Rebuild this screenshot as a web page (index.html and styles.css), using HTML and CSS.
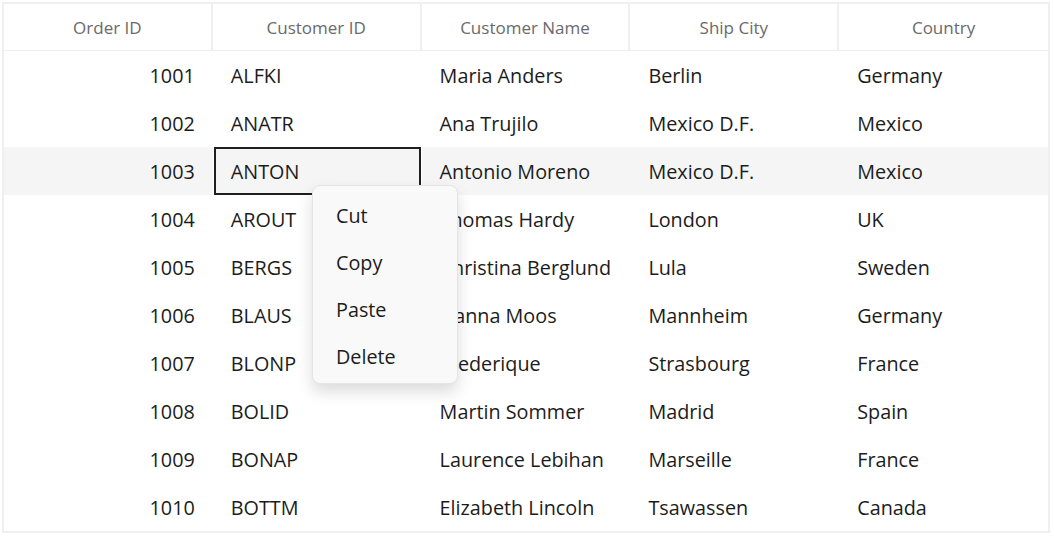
FILE: index.html
```html
<!DOCTYPE html>
<html lang="en">
<head>
  <meta charset="UTF-8">
  <meta name="viewport" content="width=device-width, initial-scale=1.0">
  <title>Orders</title>
  <link rel="stylesheet" href="styles.css">
</head>
<body>
  <div class="gridWrap">
    <div class="grid">
      <div class="headCell">Order ID</div>
      <div class="headCell">Customer ID</div>
      <div class="headCell">Customer Name</div>
      <div class="headCell">Ship City</div>
      <div class="headCell last">Country</div>

      <div class="row"><div class="cell num">1001</div><div class="cell">ALFKI</div><div class="cell">Maria Anders</div><div class="cell">Berlin</div><div class="cell">Germany</div></div>
      <div class="row"><div class="cell num">1002</div><div class="cell">ANATR</div><div class="cell">Ana Trujilo</div><div class="cell">Mexico D.F.</div><div class="cell">Mexico</div></div>
      <div class="row selected"><div class="cell num">1003</div><div class="cell current">ANTON</div><div class="cell">Antonio Moreno</div><div class="cell">Mexico D.F.</div><div class="cell">Mexico</div></div>
      <div class="row"><div class="cell num">1004</div><div class="cell">AROUT</div><div class="cell">Thomas Hardy</div><div class="cell">London</div><div class="cell">UK</div></div>
      <div class="row"><div class="cell num">1005</div><div class="cell">BERGS</div><div class="cell">Christina Berglund</div><div class="cell">Lula</div><div class="cell">Sweden</div></div>
      <div class="row"><div class="cell num">1006</div><div class="cell">BLAUS</div><div class="cell">Hanna Moos</div><div class="cell">Mannheim</div><div class="cell">Germany</div></div>
      <div class="row"><div class="cell num">1007</div><div class="cell">BLONP</div><div class="cell">Frederique</div><div class="cell">Strasbourg</div><div class="cell">France</div></div>
      <div class="row"><div class="cell num">1008</div><div class="cell">BOLID</div><div class="cell">Martin Sommer</div><div class="cell">Madrid</div><div class="cell">Spain</div></div>
      <div class="row"><div class="cell num">1009</div><div class="cell">BONAP</div><div class="cell">Laurence Lebihan</div><div class="cell">Marseille</div><div class="cell">France</div></div>
      <div class="row"><div class="cell num">1010</div><div class="cell">BOTTM</div><div class="cell">Elizabeth Lincoln</div><div class="cell">Tsawassen</div><div class="cell">Canada</div></div>
    </div>

    <!-- right-click menu for the current cell -->
    <ul class="contextMenu">
      <li>Cut</li>
      <li>Copy</li>
      <li>Paste</li>
      <li>Delete</li>
    </ul>
  </div>
</body>
</html>
```

FILE: styles.css
```css
body{
  margin: 0;
  padding: 2px;
  background-color: #ffffff;
  font-family: "Open Sans", "Noto Sans", sans-serif;
  color: #1c1c1c;
}
.gridWrap{
  position: relative;
  width: 1048px;
}
.grid{
  display: grid;
  grid-template-columns: repeat(5, 1fr);
  border: 2px solid #efefef;
}
.headCell{
  height: 46px;
  display: flex;
  align-items: center;
  justify-content: center;
  font-size: 17px;
  color: #6a6a6a;
  border-right: 2px solid #efefef;
  border-bottom: 1px solid #efefef;
}
.headCell.last{
  border-right: none;
}
.row{
  display: contents;
}
.cell{
  height: 48px;
  display: flex;
  align-items: center;
  padding-left: 18px;
  font-size: 19.8px;
  white-space: nowrap;
  overflow: hidden;
}
.cell.num{
  justify-content: flex-end;
  padding-left: 0;
  padding-right: 18px;
}
.row.selected .cell{
  background-color: #f5f5f5;
}
.cell.current{
  box-shadow: inset 0 0 0 2px #1f1f1f;
  margin-left: 1px;
  margin-right: 1px;
  padding-left: 17px;
}
.contextMenu{
  position: absolute;
  left: 310px;
  top: 183px;
  width: 144px;
  margin: 0;
  padding: 6px 0 3px 0;
  list-style: none;
  background-color: #f9f9f9;
  border: 1px solid #e4e4e4;
  border-radius: 8px;
  box-shadow: 0 8px 16px rgba(0,0,0,0.14);
}
.contextMenu li{
  height: 47px;
  display: flex;
  align-items: center;
  padding-left: 23px;
  font-size: 19.8px;
}
```
